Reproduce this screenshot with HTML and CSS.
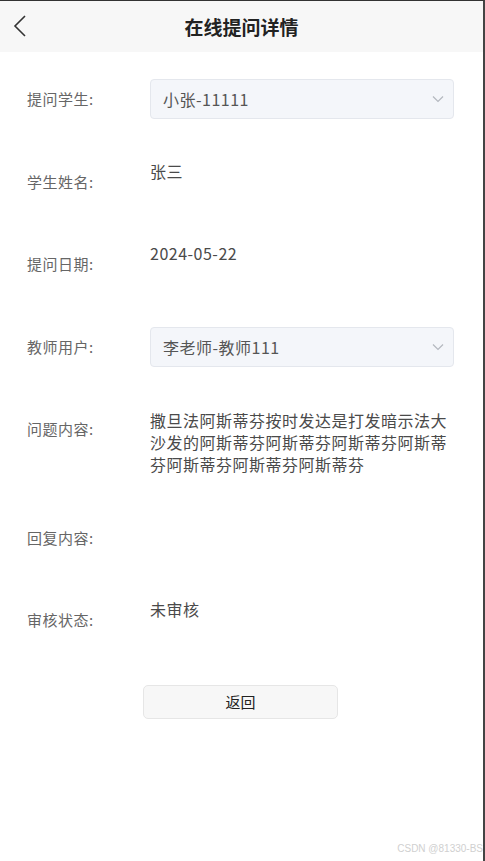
FILE: index.html
```html
<!DOCTYPE html>
<html lang="zh-CN">
<head>
    <meta charset="UTF-8">
    <meta name="viewport" content="width=device-width, initial-scale=1.0">
    <title>在线提问详情</title>
    <link rel="stylesheet" href="styles.css">
</head>
<body>
<div class="page">

    <div class="header">
        <span class="back">
            <svg width="14" height="22" viewBox="0 0 14 22"><path d="M12 1 L2 11 L12 21" fill="none" stroke="#333" stroke-width="1.6"/></svg>
        </span>
        <h1>在线提问详情</h1>
    </div>

    <div class="form">
        <div class="form-item">
            <label>提问学生:</label>
            <div class="select">
                <span>小张-11111</span>
                <svg class="arrow" width="12" height="8" viewBox="0 0 12 8"><path d="M1 1.5 L6 6.5 L11 1.5" fill="none" stroke="#b4b8bf" stroke-width="1.2"/></svg>
            </div>
        </div>
        <div class="form-item">
            <label>学生姓名:</label>
            <div class="value">张三</div>
        </div>
        <div class="form-item">
            <label>提问日期:</label>
            <div class="value">2024-05-22</div>
        </div>
        <div class="form-item">
            <label>教师用户:</label>
            <div class="select">
                <span>李老师-教师111</span>
                <svg class="arrow" width="12" height="8" viewBox="0 0 12 8"><path d="M1 1.5 L6 6.5 L11 1.5" fill="none" stroke="#b4b8bf" stroke-width="1.2"/></svg>
            </div>
        </div>
        <div class="form-item">
            <label>问题内容:</label>
            <div class="value content">撒旦法阿斯蒂芬按时发达是打发暗示法大沙发的阿斯蒂芬阿斯蒂芬阿斯蒂芬阿斯蒂芬阿斯蒂芬阿斯蒂芬阿斯蒂芬</div>
        </div>
        <div class="form-item">
            <label>回复内容:</label>
            <div class="value"></div>
        </div>
        <div class="form-item">
            <label>审核状态:</label>
            <div class="value">未审核</div>
        </div>

        <div class="button-container">
            <button>返回</button>
        </div>
    </div>

    <div class="mark">CSDN @81330-BS</div>
</div>
</body>
</html>
```

FILE: styles.css
```css
body {
    margin: 0;
    font-family: "Noto Sans CJK SC", "Noto Sans", sans-serif;
    background-color: #fff;
    color: #333;
}
.page {
    height: 860px;
    border-top: 1px solid #333;
    border-right: 2px solid #444;
    display: flex;
    flex-direction: column;
}
.header {
    height: 51px;
    background-color: #f7f7f7;
    display: flex;
    align-items: center;
    justify-content: center;
    position: relative;
}
.header h1 {
    margin: 0;
    font-size: 19px;
    font-weight: bold;
    color: #222;
}
.back {
    position: absolute;
    left: 13px;
    top: 14px;
}
.form {
    padding: 27px 29px 0 27px;
    flex: 1;
}
.form-item {
    display: flex;
    align-items: flex-start;
    min-height: 40px;
    margin-bottom: 42.5px;
}
.form-item label {
    width: 123px;
    flex-shrink: 0;
    line-height: 40px;
    font-size: 15px;
    letter-spacing: 0.5px;
    color: #666;
}
.select {
    flex: 1;
    height: 38px;
    background-color: #f4f6fa;
    border: 1px solid #e4e7ed;
    border-radius: 4px;
    display: flex;
    align-items: center;
    justify-content: space-between;
    padding: 0 9px 0 12px;
    font-size: 16px;
    letter-spacing: 0.5px;
    color: #555;
}
.value {
    flex: 1;
    font-size: 16px;
    letter-spacing: 0.5px;
    line-height: 22px;
    color: #4a4a4a;
    margin-top: -2px;
}
.value.content {
    margin-top: 0;
}
.button-container {
    display: flex;
    padding-left: 116px;
    padding-top: 2px;
}
.button-container button {
    width: 195px;
    height: 34px;
    background-color: #f7f7f7;
    border: 1px solid #e6e6e6;
    border-radius: 5px;
    font-family: inherit;
    font-size: 15px;
    color: #222;
}
.mark {
    text-align: right;
    font-family: "Liberation Sans", sans-serif;
    font-size: 10px;
    color: #d0d0d0;
    padding: 0 0 7px 0;
    white-space: nowrap;
    overflow: hidden;
}
```
